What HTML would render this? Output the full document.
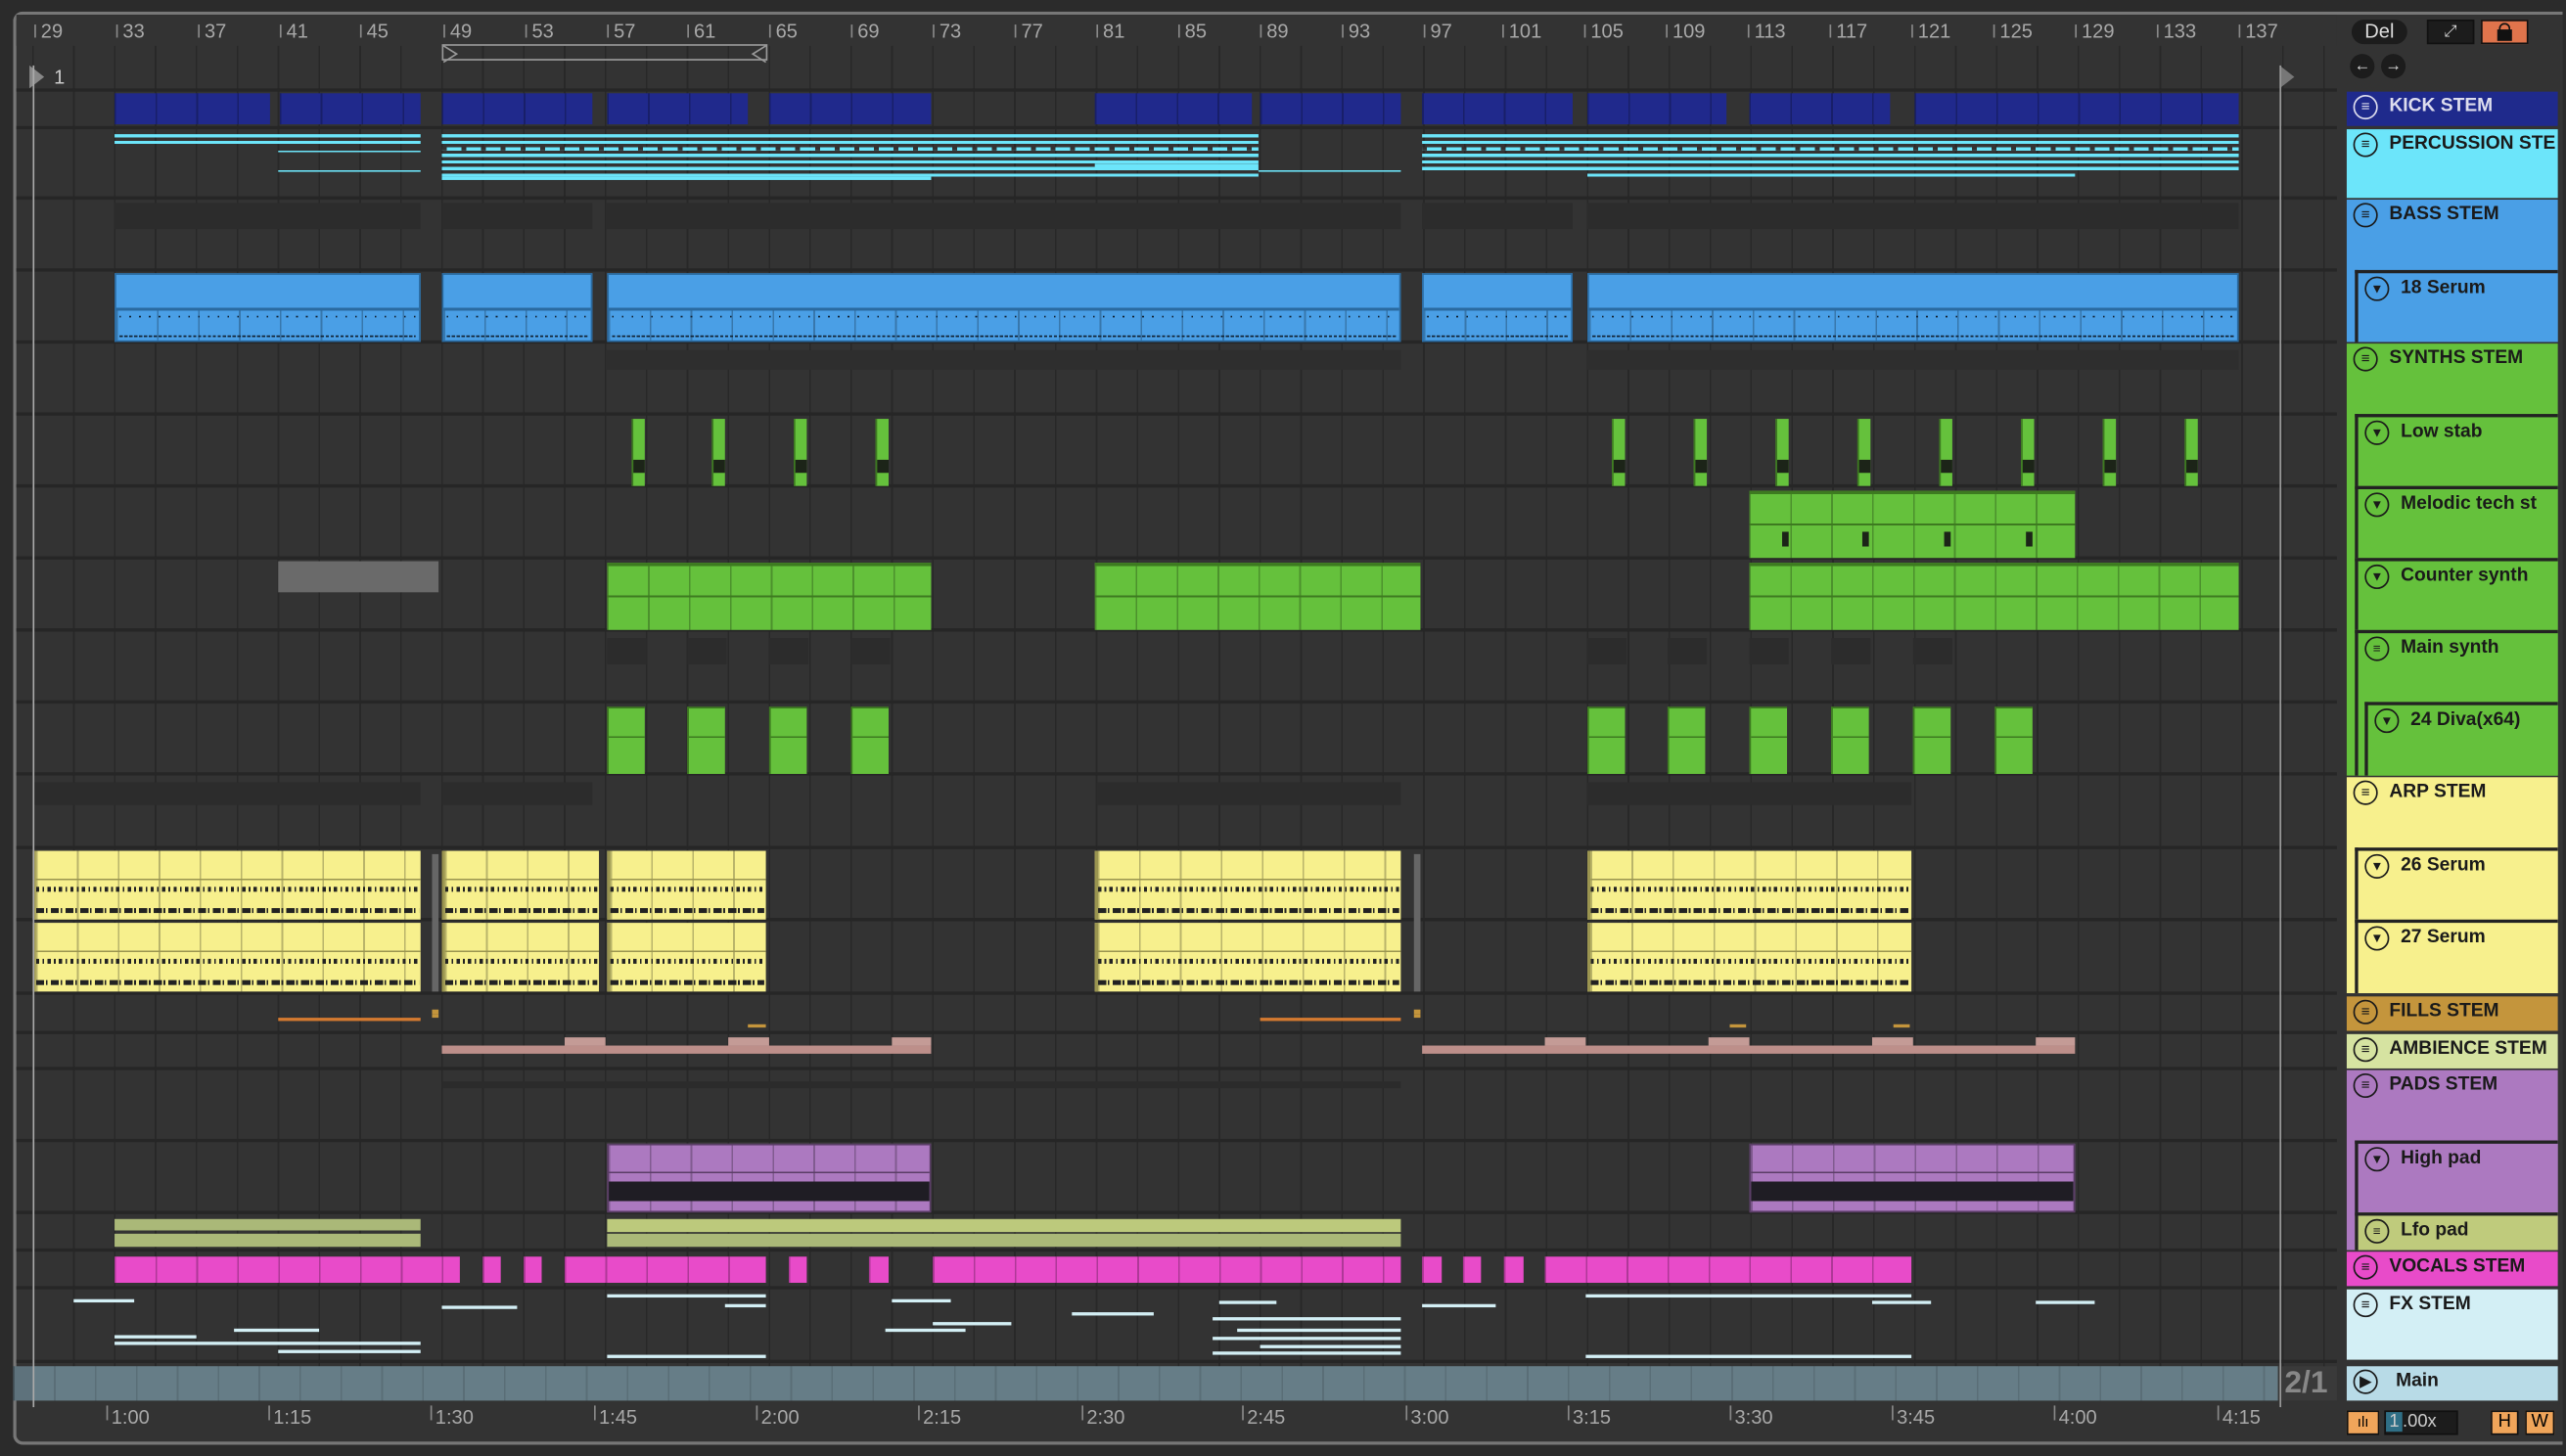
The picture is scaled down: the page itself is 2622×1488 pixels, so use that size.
<!DOCTYPE html>
<html><head><meta charset="utf-8"><style>
html,body{margin:0;padding:0;background:#2b2b2b;width:2622px;height:1488px;overflow:hidden}
#w{position:absolute;left:0;top:0;width:1568px;height:890px;transform:scale(1.67219);transform-origin:0 0;font-family:"Liberation Sans",sans-serif}
.a{position:absolute}
#frame{left:8px;top:7px;width:1558px;height:876px;border:2px solid #777;border-right:none;border-radius:6px 0 0 6px;background:#333;box-sizing:border-box}
#grid{left:10px;top:28px;width:1418px;height:826px;background:repeating-linear-gradient(90deg,transparent 0 9.6px,#282828 9.6px 10.6px,transparent 10.6px 25px)}
.sep{position:absolute;left:10px;width:1418px;height:2px;background:#262626}
.rn{position:absolute;top:12px;color:#a8a8a8;font-size:12px}
.rn:before{content:"";position:absolute;left:-4px;top:3px;width:1px;height:8px;background:#888}
.tn{position:absolute;top:859px;color:#a8a8a8;font-size:12px}
.tn:before{content:"";position:absolute;left:-3px;top:0;width:1px;height:9px;background:#888}
.h{position:absolute;left:1434px;width:129px;box-sizing:border-box;font-weight:bold;font-size:11.5px;color:#1a1a1a;padding:3px 0 0 26px;white-space:nowrap;overflow:hidden}
.h i{position:absolute;left:4px;top:2px;width:13px;height:13px;border:1.3px solid #1a1a1a;border-radius:50%;font-style:normal;font-size:9px;line-height:13px;text-align:center}
.s{position:absolute;left:1439px;width:124px;box-sizing:border-box;font-weight:bold;font-size:11.5px;color:#1a1a1a;padding:3px 0 0 26px;border-left:2px solid #222;border-top:2px solid #222;white-space:nowrap;overflow:hidden}
.s i{position:absolute;left:4px;top:2px;width:13px;height:13px;border:1.3px solid #1a1a1a;border-radius:50%;font-style:normal;font-size:8px;line-height:14px;text-align:center}
.c{position:absolute;box-sizing:border-box}
</style></head><body><div id="w">
<div class="a" id="frame"></div>
<div class="a" style="left:10px;top:9px;width:1418px;height:19px;background:#333"></div>
<div class="a" id="grid"></div>
<div id="clips"></div>
<div class="rn" style="left:25px">29</div><div class="rn" style="left:75px">33</div><div class="rn" style="left:125px">37</div><div class="rn" style="left:175px">41</div><div class="rn" style="left:224px">45</div><div class="rn" style="left:275px">49</div><div class="rn" style="left:325px">53</div><div class="rn" style="left:375px">57</div><div class="rn" style="left:424px">61</div><div class="rn" style="left:474px">65</div><div class="rn" style="left:524px">69</div><div class="rn" style="left:574px">73</div><div class="rn" style="left:624px">77</div><div class="rn" style="left:674px">81</div><div class="rn" style="left:724px">85</div><div class="rn" style="left:774px">89</div><div class="rn" style="left:824px">93</div><div class="rn" style="left:874px">97</div><div class="rn" style="left:922px">101</div><div class="rn" style="left:972px">105</div><div class="rn" style="left:1022px">109</div><div class="rn" style="left:1072px">113</div><div class="rn" style="left:1122px">117</div><div class="rn" style="left:1172px">121</div><div class="rn" style="left:1222px">125</div><div class="rn" style="left:1272px">129</div><div class="rn" style="left:1322px">133</div><div class="rn" style="left:1372px">137</div>
<div class="a" style="left:270px;top:27px;width:199px;height:10px;border:1px solid #999;box-sizing:border-box"></div>
<svg class="a" style="left:268px;top:26px" width="205" height="14"><path d="M3 2 L11 7 L3 12" fill="none" stroke="#999"/><path d="M200 2 L192 7 L200 12" fill="none" stroke="#999"/></svg>
<svg class="a" style="left:15px;top:38px" width="18" height="18"><path d="M3 2 L12 9 L3 16Z" fill="#888"/></svg>
<div class="a" style="left:33px;top:40px;color:#ccc;font-size:12px">1</div>
<svg class="a" style="left:1390px;top:38px" width="18" height="18"><path d="M3 2 L12 9 L3 16Z" fill="#777"/></svg>
<div class="a" style="left:20px;top:40px;width:1px;height:820px;background:#aaa"></div>
<div class="a" style="left:1393px;top:40px;width:1px;height:820px;background:#999"></div>
<div class="a" style="left:1437px;top:12px;width:34px;height:15px;border-radius:8px;background:#1c1c1c;color:#ddd;font-size:12px;text-align:center;line-height:15px">Del</div>
<div class="a" style="left:1483px;top:12px;width:29px;height:15px;background:#1c1c1c;border:1px solid #111;box-sizing:border-box;color:#ddd;font-size:10px;text-align:center;line-height:13px">⤢</div>
<div class="a" style="left:1516px;top:12px;width:29px;height:15px;background:#e0744c;border:1px solid #111;box-sizing:border-box"><div class="a" style="left:9px;top:5px;width:9px;height:7px;background:#111"></div><div class="a" style="left:10px;top:1px;width:5px;height:5px;border:1.5px solid #111;border-bottom:none;border-radius:4px 4px 0 0"></div></div>
<div class="a" style="left:1436px;top:33px;width:15px;height:15px;border-radius:50%;background:#1c1c1c;color:#ddd;font-size:10px;text-align:center;line-height:15px">←</div>
<div class="a" style="left:1455px;top:33px;width:15px;height:15px;border-radius:50%;background:#1c1c1c;color:#ddd;font-size:10px;text-align:center;line-height:15px">→</div>
<div class="h" style="top:56px;height:21px;background:#1f2a8c;color:#dde"><i style="border-color:#dde">≡</i>KICK STEM</div>
<div class="h" style="top:79px;height:42px;background:#6ce5fa"><i>≡</i>PERCUSSION STE</div>
<div class="h" style="top:122px;height:87px;background:#4a9fe6"><i>≡</i>BASS STEM</div>
<div class="s" style="top:165px;height:44px;background:#4a9fe6"><i>▼</i>18 Serum</div>
<div class="h" style="top:210px;height:264px;background:#65c13c"><i>≡</i>SYNTHS STEM</div>
<div class="s" style="top:253px;height:44px;background:#65c13c"><i>▼</i>Low stab</div>
<div class="s" style="top:297px;height:44px;background:#65c13c"><i>▼</i>Melodic tech st</div>
<div class="s" style="top:341px;height:44px;background:#65c13c"><i>▼</i>Counter synth</div>
<div class="s" style="top:385px;height:89px;background:#65c13c"><i>≡</i>Main synth</div>
<div class="s" style="left:1445px;width:118px;top:429px;height:45px;background:#65c13c"><i>▼</i>24 Diva(x64)</div>
<div class="h" style="top:475px;height:132px;background:#f7f08d"><i>≡</i>ARP STEM</div>
<div class="s" style="top:518px;height:44px;background:#f7f08d"><i>▼</i>26 Serum</div>
<div class="s" style="top:562px;height:45px;background:#f7f08d"><i>▼</i>27 Serum</div>
<div class="h" style="top:609px;height:21px;background:#c4953c"><i>≡</i>FILLS STEM</div>
<div class="h" style="top:632px;height:21px;background:#d6e3a1"><i>≡</i>AMBIENCE STEM</div>
<div class="h" style="top:654px;height:110px;background:#ac79c0"><i>≡</i>PADS STEM</div>
<div class="s" style="top:697px;height:44px;background:#ac79c0"><i>▼</i>High pad</div>
<div class="s" style="top:741px;height:23px;background:#bfcb7c"><i>≡</i>Lfo pad</div>
<div class="h" style="top:765px;height:21px;background:#e84bc9"><i>≡</i>VOCALS STEM</div>
<div class="h" style="top:788px;height:43px;background:#d3eff5"><i>≡</i>FX STEM</div>
<div class="h" style="top:835px;height:21px;background:#b8dbe7;padding-left:30px"><i>▶</i>Main</div>
<div class="a" style="left:1396px;top:835px;color:#888;font-size:19px;font-weight:bold">2/1</div>
<div class="tn" style="left:68px">1:00</div><div class="tn" style="left:167px">1:15</div><div class="tn" style="left:266px">1:30</div><div class="tn" style="left:366px">1:45</div><div class="tn" style="left:465px">2:00</div><div class="tn" style="left:564px">2:15</div><div class="tn" style="left:664px">2:30</div><div class="tn" style="left:762px">2:45</div><div class="tn" style="left:862px">3:00</div><div class="tn" style="left:961px">3:15</div><div class="tn" style="left:1060px">3:30</div><div class="tn" style="left:1159px">3:45</div><div class="tn" style="left:1258px">4:00</div><div class="tn" style="left:1358px">4:15</div>
<div class="a" style="left:1434px;top:862px;width:20px;height:15px;background:#f0a55a;border:1px solid #111;box-sizing:border-box;font-size:9px;text-align:center;line-height:13px">ılı</div>
<div class="a" style="left:1457px;top:862px;width:45px;height:15px;background:#1c1c1c;border:1px solid #111;box-sizing:border-box;color:#ccc;font-size:11px;line-height:13px"><span style="background:#2f6f86;padding:0 2px 0 2px">1</span>.00x</div>
<div class="a" style="left:1522px;top:862px;width:17px;height:15px;background:#f0a55a;border:1px solid #111;box-sizing:border-box;font-size:11px;text-align:center;line-height:13px">H</div>
<div class="a" style="left:1543px;top:862px;width:18px;height:15px;background:#f0a55a;border:1px solid #111;box-sizing:border-box;font-size:11px;text-align:center;line-height:13px">W</div>
<script>
var C=document.getElementById('clips'),h='';
function r(x,y,w,hh,bg,ex){h+='<div class="c" style="left:'+x+'px;top:'+y+'px;width:'+w+'px;height:'+hh+'px;background:'+bg+';'+(ex||'')+'"></div>';}
function R(x1,x2,y,hh,bg,ex){r(x1,y,x2-x1,hh,bg,ex);}
var seps=[54,77,120,164,208,252,296,340,384,428,472,517,561,606,630,652,696,740,763,786,831];
seps.forEach(function(y){h+='<div class="sep" style="top:'+y+'px"></div>';});
var bars='repeating-linear-gradient(90deg,rgba(0,0,0,.25) 0 1px,transparent 1px 25px)';
[[70,165],[171,257],[270,362],[371,457],[470,569],[669,765],[770,856],[869,961],[970,1055],[1069,1155],[1170,1368]].forEach(function(a){R(a[0],a[1],57,19,'#20298c;background-image:'+bars);});
var pg='repeating-linear-gradient(180deg,#6ce5fa 0 2px,transparent 2px 4px)';
[[70,257,82,8],[170,257,92,1],[170,257,104,1],[270,769,82,26],[270,569,108,2],[869,1368,82,24],[970,1268,106,3],[669,769,100,2],[769,856,104,1]].forEach(function(a){R(a[0],a[1],a[2],a[3],pg);});
r(270,90,499,2,'repeating-linear-gradient(90deg,#333 0 3px,transparent 3px 12px)');
r(869,90,499,2,'repeating-linear-gradient(90deg,#333 0 3px,transparent 3px 12px)');
[[70,257],[270,362],[370,856],[869,961],[970,1368]].forEach(function(a){R(a[0],a[1],124,16,'#2c2c2c');});
[[70,257],[270,362],[371,856],[869,961],[970,1368]].forEach(function(a){R(a[0],a[1],167,42,'#4a9fe6;border:1px solid #2a6aa0;background-image:linear-gradient(#4a9fe6 0 20px,#2a6aa0 20px 22px,transparent 22px),'+bars);r(a[0]+3,193,a[1]-a[0]-6,1,'repeating-linear-gradient(90deg,#123 0 1px,transparent 1px 6px)');r(a[0]+3,205,a[1]-a[0]-6,1,'repeating-linear-gradient(90deg,#123 0 2px,transparent 2px 3px)');});
[[370,856],[970,1368]].forEach(function(a){R(a[0],a[1],214,12,'#2e2e2e');});
[386,435,485,535,985,1035,1085,1135,1185,1235,1285,1335].forEach(function(x){r(x,256,8,41,'#65c13c;border-left:1px solid #3d7a20');r(x+1,281,7,8,'#1c2418');});
R(1069,1268,300,41,'#65c13c;border-top:2px solid #3d7a20;background-image:linear-gradient(transparent 0 18px,#3d7a20 18px 19px,transparent 19px),'+bars);
[1089,1138,1188,1238].forEach(function(x){r(x,325,4,9,'#1c2418');});
R(170,268,343,19,'#6a6a6a');
[[371,569],[669,868],[1069,1368]].forEach(function(a){R(a[0],a[1],344,41,'#65c13c;border-top:2px solid #3d7a20;background-image:linear-gradient(transparent 0 18px,#3d7a20 18px 19px,transparent 19px),'+bars);});
[371,420,470,520,970,1019,1069,1119,1169].forEach(function(x){r(x,390,24,16,'#2c2c2c');});
[371,420,470,520,970,1019,1069,1119,1169,1219].forEach(function(x){r(x,432,23,41,'#65c13c;border-left:1px solid #3d7a20;border-top:1px solid #3d7a20;background-image:linear-gradient(transparent 0 17px,#3d7a20 17px 18px,transparent 18px)');});
[[20,257],[270,362],[670,856],[970,1168]].forEach(function(a){R(a[0],a[1],478,14,'#2c2c2c');});
[[20,257],[270,366],[371,468],[669,856],[970,1168]].forEach(function(a){[520,564].forEach(function(y){R(a[0],a[1],y,42,'#f7f08d;border-left:2px solid #9a9550;background-image:linear-gradient(transparent 0 17px,#9a9550 17px 18px,transparent 18px),'+bars);r(a[0]+2,y+22,a[1]-a[0]-3,3,'repeating-linear-gradient(90deg,#222 0 2px,transparent 2px 4px,#222 4px 5px,transparent 5px 7px)');r(a[0]+2,y+35,a[1]-a[0]-3,3,'repeating-linear-gradient(90deg,#222 0 5px,transparent 5px 6px,#222 6px 7px,transparent 7px 9px)');});});
[264,864].forEach(function(x){r(x,522,4,84,'#666');});
[[170,257],[770,856]].forEach(function(a){R(a[0],a[1],622,2,'#d47a30');});
[[264,268,617,3],[264,268,620,2],[457,468,626,2],[864,868,617,3],[864,868,620,2],[1057,1067,626,2],[1157,1167,626,2]].forEach(function(a){R(a[0],a[1],a[2],a[3],'#c4953c');});
[[270,569],[869,1268]].forEach(function(a){R(a[0],a[1],639,5,'#bd8f8a');});
[[345,370],[445,470],[545,569],[944,969],[1044,1069],[1144,1169],[1244,1268]].forEach(function(a){R(a[0],a[1],634,5,'#c49b96');});
R(270,856,661,4,'#2b2b2b');
[[371,569],[1069,1268]].forEach(function(a){R(a[0],a[1],699,42,'#ac79c0;border:1px solid #5a3d66;background-image:linear-gradient(transparent 0 16px,#5a3d66 16px 17px,transparent 17px 22px,#1f1d24 22px 34px,transparent 34px),'+bars);});
R(70,257,745,7,'#aab878');R(70,257,754,8,'#aab878');
R(371,856,745,8,'#bcc97c');R(371,856,754,8,'#aab878');
[[70,281],[295,306],[320,331],[345,468],[482,493],[531,543],[570,856],[869,881],[894,905],[919,931],[944,1168]].forEach(function(a){R(a[0],a[1],768,16,'#e84bc9;background-image:'+bars);});
[[45,82,794],[270,316,798],[371,468,791],[443,468,797],[545,581,794],[70,120,816],[70,257,820],[170,257,825],[143,195,812],[570,618,808],[541,590,812],[655,705,802],[745,780,795],[741,856,805],[756,856,812],[741,856,817],[770,856,822],[741,856,826],[371,468,828],[869,914,797],[969,1168,791],[1144,1180,795],[1244,1280,795],[969,1168,828]].forEach(function(a){R(a[0],a[1],a[2],2,'#d3eff5');});
R(8,1392,835,21,'#5e727c;background-image:'+bars);
R(20,1392,835,21,'rgba(110,135,146,.5)');
h+='<div class="c" style="left:1392px;top:835px;width:36px;height:21px;background:#3a3a3a"></div>';
C.innerHTML=h;
</script>
</div></body></html>
